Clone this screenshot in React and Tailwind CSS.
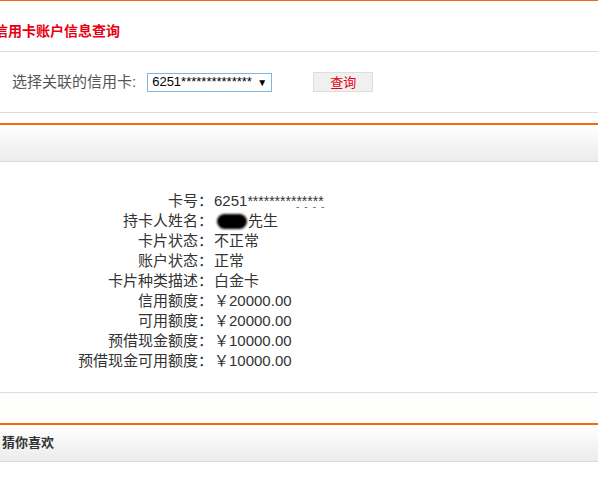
import React from 'react';

const rows = [
  ['卡号', 'card'],
  ['持卡人姓名', 'name'],
  ['卡片状态', '不正常'],
  ['账户状态', '正常'],
  ['卡片种类描述', '白金卡'],
  ['信用额度', '￥20000.00'],
  ['可用额度', '￥20000.00'],
  ['预借现金额度', '￥10000.00'],
  ['预借现金可用额度', '￥10000.00'],
];

const font = { fontFamily: '"Liberation Sans", "Noto Sans CJK SC", sans-serif' };

const Value = ({ v }) => {
  if (v === 'card') {
    return (
      <span className="relative whitespace-nowrap">
        6251<span className="text-[14px]">**************</span>
        <span className="absolute left-[82px] top-[11px] text-[10px] leading-none text-[#666] tracking-[5px] whitespace-nowrap">----</span>
      </span>
    );
  }
  if (v === 'name') {
    return (
      <span className="flex items-center">
        <span className="inline-block ml-[3px] w-[30px] h-[15px] bg-black rounded-full blur-[1px] mr-[1px]"></span>
        先生
      </span>
    );
  }
  return <span>{v}</span>;
};

const App = () => {
  return (
    <div className="w-[598px] h-[495px] bg-white overflow-hidden text-[14px]" style={font}>
      {/* query panel */}
      <div className="border-t border-[#f26a10] h-[52px] border-b border-b-[#dcdcdc] flex items-center">
        <h2 className="-ml-[6px] text-[14px] font-bold text-[#e60012] mt-[10px] whitespace-nowrap">信用卡账户信息查询</h2>
      </div>
      <div className="h-[61px] border-b border-[#dcdcdc] flex items-center pl-[12px] text-[#555]">
        <span className="text-[15px]">选择关联的信用卡:</span>
        <div className="ml-[11px] w-[125px] h-[19px] border border-[#7fb4e6] flex items-center justify-between pl-[4px] pr-[4px] text-[13px] text-black">
          <span>6251**************</span>
          <span className="text-[10px]">▼</span>
        </div>
        <button className="ml-[41px] w-[60px] h-[20px] bg-[#f0f0f0] border border-[#dddddd] text-[#e60012] text-[13px] leading-none">查询</button>
      </div>

      {/* account info */}
      <div className="mt-[10px] border-t-2 border-[#f26a10] h-[39px] bg-gradient-to-b from-white to-[#ececec] border-b border-b-[#d8d8d8]"></div>
      <div className="h-[230px] pt-[29px] text-[#333] text-[15px]">
        {rows.map(([label, v]) => (
          <div key={label} className="grid grid-cols-[213px_1fr] h-[20px] leading-[20px]">
            <span className="text-right whitespace-nowrap">{label}：</span>
            <span className="pl-[1px] flex items-center"><Value v={v} /></span>
          </div>
        ))}
      </div>
      <div className="border-t border-[#dcdcdc] h-[31px] bg-[#fefffc]"></div>

      {/* recommendations */}
      <div className="border-t-2 border-[#f26a10] h-[39px] bg-gradient-to-b from-white to-[#ececec] border-b border-b-[#d8d8d8] flex items-center pl-[2px]">
        <span className="font-bold text-[#333] text-[13px]">猜你喜欢</span>
      </div>
    </div>
  );
};

export default App;
